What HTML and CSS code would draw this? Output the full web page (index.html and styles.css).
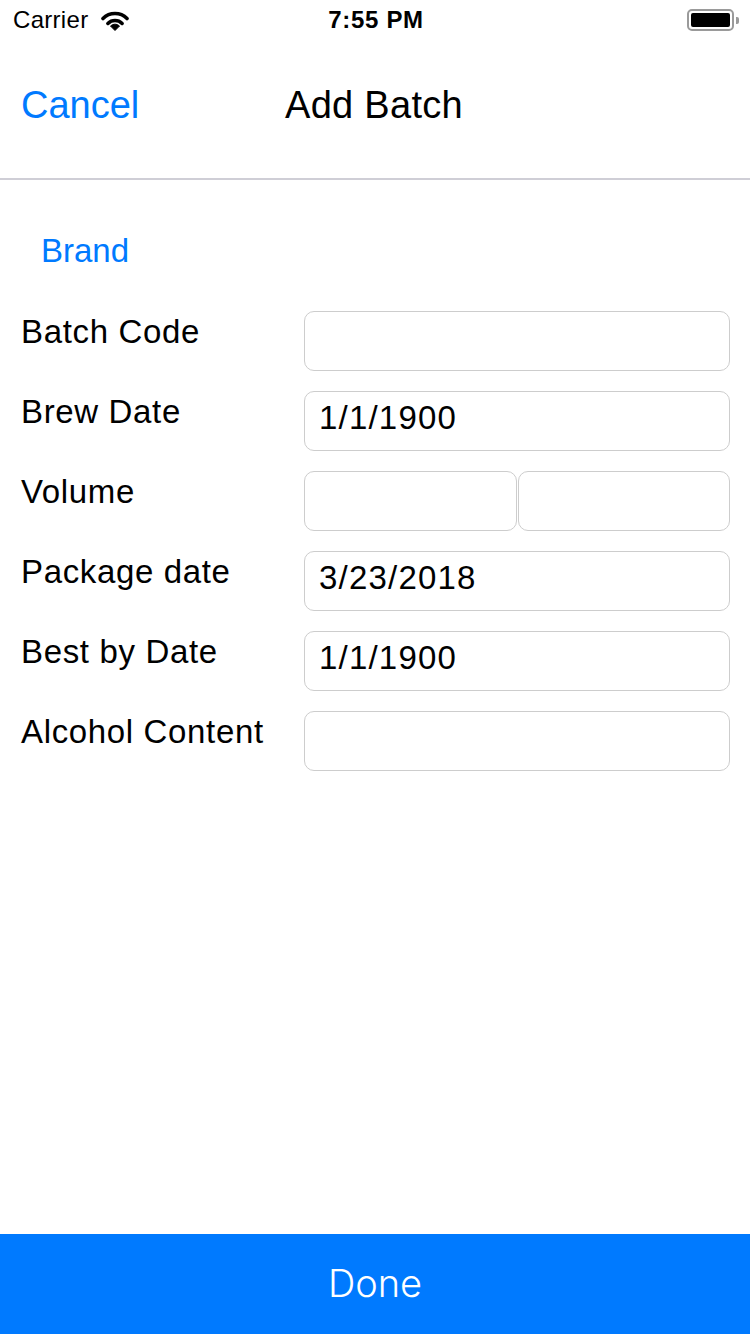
FILE: index.html
```html
<!DOCTYPE html>
<html>
<head>
<meta charset="utf-8">
<link rel="stylesheet" href="styles.css">
</head>
<body>
<div class="page">
  <div class="status">
    <div class="status-left">
      <span class="carrier">Carrier</span>
      <svg class="wifi" width="28" height="21" viewBox="0 0 28 21">
        <path d="M2 8.5 A17 17 0 0 1 26 8.5" fill="none" stroke="#000" stroke-width="3.6" stroke-linecap="round"/>
        <path d="M6.9 13.4 A10 10 0 0 1 21.1 13.4" fill="none" stroke="#000" stroke-width="3.6" stroke-linecap="round"/>
        <path d="M14 20.5 L9.5 16 A6.4 6.4 0 0 1 18.5 16 Z" fill="#000" stroke="#000" stroke-width="1" stroke-linejoin="round"/>
      </svg>
    </div>
    <div class="time">7:55 PM</div>
    <div class="status-right">
      <div class="battery"><div class="battery-fill"></div></div>
      <div class="battery-nub"></div>
    </div>
  </div>

  <div class="nav">
    <span class="cancel">Cancel</span>
    <span class="title">Add Batch</span>
  </div>

  <div class="brand">Brand</div>

  <div class="form">
    <div class="row">
      <div class="label">Batch Code</div>
      <div class="field"></div>
    </div>
    <div class="row">
      <div class="label">Brew Date</div>
      <div class="field">1/1/1900</div>
    </div>
    <div class="row">
      <div class="label">Volume</div>
      <div class="field-pair">
        <div class="field"></div>
        <div class="field"></div>
      </div>
    </div>
    <div class="row">
      <div class="label">Package date</div>
      <div class="field">3/23/2018</div>
    </div>
    <div class="row">
      <div class="label">Best by Date</div>
      <div class="field">1/1/1900</div>
    </div>
    <div class="row">
      <div class="label">Alcohol Content</div>
      <div class="field"></div>
    </div>
  </div>

  <div class="done">Done</div>
</div>
</body>
</html>
```

FILE: styles.css
```css
* { box-sizing: border-box; }
html, body {
  margin: 0;
  padding: 0;
  background: #fff;
}
body {
  font-family: "Liberation Sans", Arial, sans-serif;
  color: #000;
}
.page {
  width: 750px;
  height: 1334px;
  display: flex;
  flex-direction: column;
  overflow: hidden;
}
.status {
  height: 40px;
  display: flex;
  align-items: center;
  justify-content: space-between;
  padding: 0 11px 0 13px;
}
.status-left {
  display: flex;
  align-items: center;
  gap: 13px;
  width: 200px;
}
.carrier {
  font-size: 24px;
  line-height: 40px;
  letter-spacing: 0.3px;
}
.wifi {
  display: block;
  margin-top: 0;
}
.time {
  font-size: 24px;
  font-weight: bold;
  line-height: 40px;
  letter-spacing: 0.7px;
}
.status-right {
  width: 200px;
  display: flex;
  justify-content: flex-end;
  align-items: center;
  gap: 2px;
}
.battery {
  width: 47px;
  height: 22px;
  border: 2px solid #9a9a9a;
  border-radius: 5px;
  padding: 2px;
}
.battery-fill {
  width: 100%;
  height: 100%;
  background: #000;
  border-radius: 2px;
}
.battery-nub {
  width: 3px;
  height: 7px;
  background: #9a9a9a;
  border-radius: 0 2px 2px 0;
}
.nav {
  height: 140px;
  border-bottom: 2px solid #cfced6;
  display: flex;
  align-items: flex-start;
  padding-top: 42px;
}
.cancel {
  color: #007aff;
  font-size: 38px;
  line-height: 46px;
  padding-left: 21px;
  width: 285px;
}
.title {
  font-size: 38px;
  line-height: 46px;
  letter-spacing: 0.3px;
}
.brand {
  color: #007aff;
  font-size: 33px;
  line-height: 40px;
  padding: 51px 0 0 41px;
  height: 131px;
}
.form {
  display: flex;
  flex-direction: column;
  gap: 20px;
  padding: 0 20px 0 21px;
}
.row {
  display: flex;
  height: 60px;
}
.label {
  width: 283px;
  font-size: 33px;
  line-height: 40px;
  padding-top: 1px;
  letter-spacing: 0.65px;
  white-space: nowrap;
}
.field {
  width: 426px;
  height: 60px;
  border: 1px solid #cdcdcd;
  border-radius: 10px;
  display: flex;
  align-items: center;
  padding: 0 14px 6px;
  font-size: 33px;
  letter-spacing: 1.2px;
}
.field-pair {
  display: flex;
  gap: 1px;
  width: 426px;
}
.field-pair .field {
  flex: 1;
  width: auto;
}
.done {
  margin-top: auto;
  height: 100px;
  background: #007aff;
  color: #fff;
  font-family: Inter, "Liberation Sans", sans-serif;
  font-weight: 300;
  font-size: 38px;
  display: flex;
  align-items: center;
  justify-content: center;
  padding-bottom: 2px;
}
```
